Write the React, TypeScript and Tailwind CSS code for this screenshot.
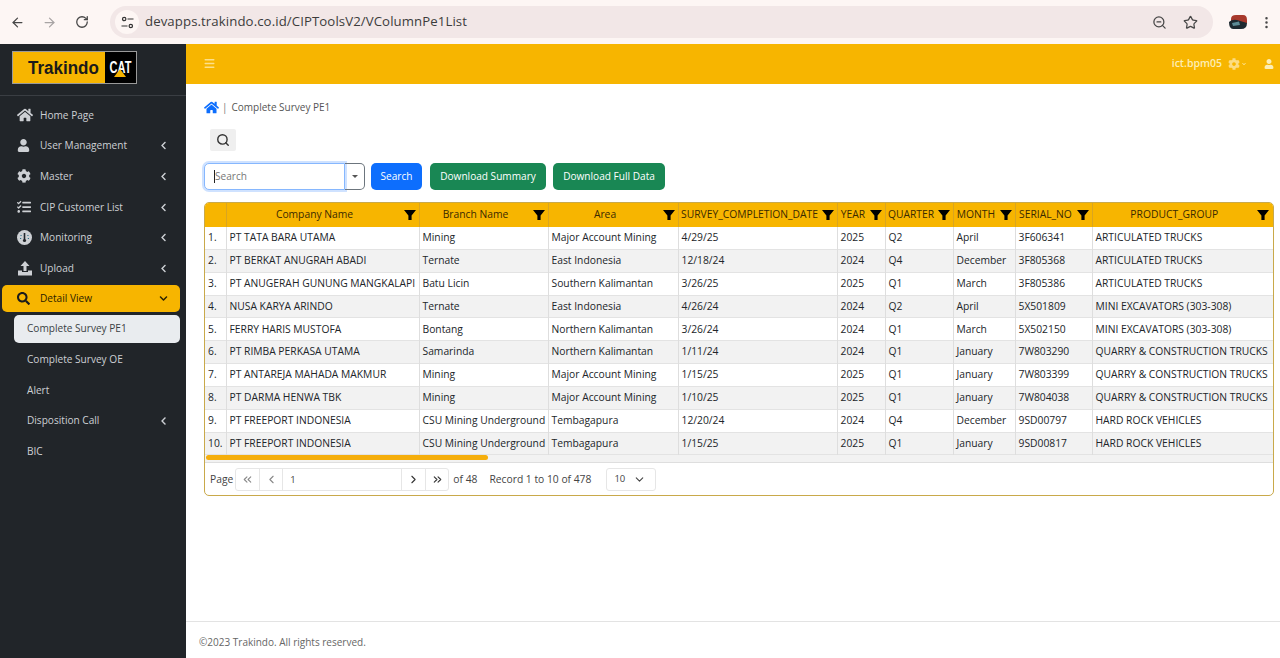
import {
  FaCog,
  FaChevronDown,
  FaChevronLeft,
  FaHome,
  FaSearch,
  FaTasks,
  FaUser,
} from "react-icons/fa";
import {
  ArrowLeft,
  ArrowRight,
  ChevronDown,
  ChevronLeft,
  ChevronRight,
  ChevronsLeft,
  ChevronsRight,
  EllipsisVertical,
  Menu,
  RotateCw,
  Search,
  Star,
  ZoomOut,
} from "lucide-react";

const FONT = "font-['Open_Sans','Noto_Sans',sans-serif]";

const columns = [
  { label: "", width: "w-[21px]" },
  { label: "Company Name", width: "w-[193px]" },
  { label: "Branch Name", width: "w-[129px]" },
  { label: "Area", width: "w-[130px]" },
  { label: "SURVEY_COMPLETION_DATE", width: "w-[159px]" },
  { label: "YEAR", width: "w-[48px]" },
  { label: "QUARTER", width: "w-[68px]" },
  { label: "MONTH", width: "w-[62px]" },
  { label: "SERIAL_NO", width: "w-[77px]" },
  { label: "PRODUCT_GROUP", width: "w-[182px]" },
];

const rows = [
  ["1.", "PT TATA BARA UTAMA", "Mining", "Major Account Mining", "4/29/25", "2025", "Q2", "April", "3F606341", "ARTICULATED TRUCKS"],
  ["2.", "PT BERKAT ANUGRAH ABADI", "Ternate", "East Indonesia", "12/18/24", "2024", "Q4", "December", "3F805368", "ARTICULATED TRUCKS"],
  ["3.", "PT ANUGERAH GUNUNG MANGKALAPI", "Batu Licin", "Southern Kalimantan", "3/26/25", "2025", "Q1", "March", "3F805386", "ARTICULATED TRUCKS"],
  ["4.", "NUSA KARYA ARINDO", "Ternate", "East Indonesia", "4/26/24", "2024", "Q2", "April", "5X501809", "MINI EXCAVATORS (303-308)"],
  ["5.", "FERRY HARIS MUSTOFA", "Bontang", "Northern Kalimantan", "3/26/24", "2024", "Q1", "March", "5X502150", "MINI EXCAVATORS (303-308)"],
  ["6.", "PT RIMBA PERKASA UTAMA", "Samarinda", "Northern Kalimantan", "1/11/24", "2024", "Q1", "January", "7W803290", "QUARRY & CONSTRUCTION TRUCKS"],
  ["7.", "PT ANTAREJA MAHADA MAKMUR", "Mining", "Major Account Mining", "1/15/25", "2025", "Q1", "January", "7W803399", "QUARRY & CONSTRUCTION TRUCKS"],
  ["8.", "PT DARMA HENWA TBK", "Mining", "Major Account Mining", "1/10/25", "2025", "Q1", "January", "7W804038", "QUARRY & CONSTRUCTION TRUCKS"],
  ["9.", "PT FREEPORT INDONESIA", "CSU Mining Underground", "Tembagapura", "12/20/24", "2024", "Q4", "December", "9SD00797", "HARD ROCK VEHICLES"],
  ["10.", "PT FREEPORT INDONESIA", "CSU Mining Underground", "Tembagapura", "1/15/25", "2025", "Q1", "January", "9SD00817", "HARD ROCK VEHICLES"],
];

function GaugeIcon() {
  return (
    <svg width="15" height="15" viewBox="0 0 15 15">
      <circle cx="7.5" cy="7.5" r="7.5" fill="#cdd0d4" />
      <path d="M7.5 3V10" stroke="#212529" strokeWidth="1.6" />
      <circle cx="7.5" cy="10.5" r="1.6" fill="#212529" />
      <path d="M3.5 5.5H4.6M3 8.5H4.2M10.4 5.5H11.5M10.8 8.5H12" stroke="#2c6f86" strokeWidth="1" />
    </svg>
  );
}

function UploadIcon() {
  return (
    <svg width="16" height="15" viewBox="0 0 16 15" fill="#cdd0d4">
      <path d="M8 0L12.5 5H9.5V10H6.5V5H3.5Z" />
      <path d="M1 9.5H5V11H11V9.5H15V14.5H1Z" />
    </svg>
  );
}

function FunnelIcon() {
  return (
    <svg width="12" height="10" viewBox="0 0 12 10" className="shrink-0">
      <path d="M0 0H12L7.6 5.5V10H4.4V5.5Z" fill="#000" />
    </svg>
  );
}

const topMenu = [
  { label: "Home Page", icon: <FaHome size={16} /> },
  { label: "User Management", icon: <FaUser size={13} />, more: true },
  { label: "Master", icon: <FaCog size={14} />, more: true },
  { label: "CIP Customer List", icon: <FaTasks size={14} />, more: true },
  { label: "Monitoring", icon: <GaugeIcon />, more: true },
  { label: "Upload", icon: <UploadIcon />, more: true },
];

const subMenu = [
  { label: "Complete Survey OE" },
  { label: "Alert" },
  { label: "Disposition Call", more: true },
  { label: "BIC" },
];

function BrowserBar() {
  return (
    <div className="flex h-[44px] items-center bg-[#fdf6f4] text-[#474747]">
      <div className="flex w-[110px] items-center gap-[17px] pl-[10px]">
        <ArrowLeft size={15} strokeWidth={2} />
        <ArrowRight size={15} strokeWidth={2} className="text-[#a8a4a4]" />
        <RotateCw size={14} strokeWidth={2.2} className="ml-[1px]" />
      </div>
      <div className="flex h-[32px] w-[1103px] items-center rounded-full bg-[#f2e7e7] pl-[5px] pr-[15px]">
        <span className="flex h-[24px] w-[24px] items-center justify-center rounded-full bg-[#fdf6f4]">
          <svg width="13" height="13" viewBox="0 0 13 13" fill="none" stroke="#333" strokeWidth="1.2">
            <circle cx="3.2" cy="3" r="1.7" />
            <path d="M6.5 3H12.5M.5 10H6.5" />
            <circle cx="9.8" cy="10" r="1.7" />
          </svg>
        </span>
        <span className="ml-[6px] flex-1 text-[13.2px] tracking-[0.1px] text-[#3c3c3c]">
          devapps.trakindo.co.id/CIPToolsV2/VColumnPe1List
        </span>
        <ZoomOut size={15} strokeWidth={2} className="mr-[16px]" />
        <Star size={15} strokeWidth={2} />
      </div>
      <svg width="20" height="16" viewBox="0 0 20 16" className="ml-[15px]">
        <path d="M3 5Q3 1 8 1H15Q19 1 19 6V9H3Z" fill="#a8392c" />
        <path d="M1 8Q4 5 9 6L19 9Q19 15 13 15H5Q1 15 1 8Z" fill="#1d2a30" />
        <path d="M4 9L11 7.5L12 11L5 12Z" fill="#5d8c96" />
      </svg>
      <EllipsisVertical size={15} className="ml-[11px]" />
    </div>
  );
}

function Logo() {
  return (
    <div className="flex h-[33px] w-[125px] border border-[#9a9a9a] bg-[#f7b500]">
      <div className="flex-1 pl-[15px] text-[17px] font-bold leading-[31px] text-[#1a1a1a] font-['Liberation_Sans',sans-serif]">
        <span className="inline-block scale-y-110">Trakindo</span>
      </div>
      <div className="relative flex w-[31px] justify-center bg-black font-['Liberation_Sans',sans-serif] text-[11px] font-bold leading-[31px] text-white">
        <span className="scale-y-150">CAT</span>
        <span className="absolute bottom-[6px] left-[9px] h-0 w-0 border-x-[6px] border-b-[8px] border-x-transparent border-b-[#f7b500]" />
      </div>
    </div>
  );
}

function Sidebar() {
  return (
    <aside className="flex w-[186px] shrink-0 flex-col bg-[#212529] text-[10.1px] text-[#cdd0d4]">
      <div className="flex h-[52px] items-start border-b border-[#3a3e43] pl-[12px] pt-[7px]">
        <Logo />
      </div>
      <nav className="pt-[4px]">
        {topMenu.map((item) => (
          <div key={item.label} className="flex h-[30.6px] items-center pl-[17px] pr-[18px]">
            <span className="flex w-[23px] justify-start">{item.icon}</span>
            <span className="flex-1">{item.label}</span>
            {item.more && <FaChevronLeft size={9} />}
          </div>
        ))}
        <div className="ml-[2px] mt-[1px] flex h-[27px] w-[178px] items-center rounded-[5px] bg-[#f7b500] pl-[15px] pr-[12px] pt-[1px] text-[#2b2200]">
          <span className="flex w-[23px]">
            <FaSearch size={13} className="text-[#1b1b1b]" />
          </span>
          <span className="flex-1">Detail View</span>
          <FaChevronDown size={9} />
        </div>
        <div className="ml-[14px] mt-[3px] flex h-[28px] w-[166px] items-center rounded-[5px] bg-[#e9ecef] pl-[13px] text-[#3a3f44]">
          Complete Survey PE1
        </div>
        {subMenu.map((item) => (
          <div key={item.label} className="flex h-[30.6px] translate-y-[1.5px] items-center pl-[27px] pr-[18px]">
            <span className="flex-1">{item.label}</span>
            {item.more && <FaChevronLeft size={9} />}
          </div>
        ))}
      </nav>
    </aside>
  );
}

function DataTable() {
  return (
    <div className="mr-[6px] overflow-hidden rounded-[5px] border border-[#c9a94a] text-[10.3px] text-[#212529]">
      <table className="w-full table-fixed border-collapse">
        <colgroup>
          {columns.map((c, i) => (
            <col key={i} className={c.width} />
          ))}
        </colgroup>
        <thead>
          <tr className="h-[23.5px] bg-[#f7b500] text-[#3a2a00]">
            {columns.map((c, i) => (
              <th key={i} className="border-r border-[#d9a520] pl-[2px] pr-[3px] font-normal last:border-r-0 last:pr-[5px]">
                {c.label && (
                  <div className="flex items-center">
                    <span className="flex-1 whitespace-nowrap text-center">{c.label}</span>
                    <span className="ml-[3px]">
                      <FunnelIcon />
                    </span>
                  </div>
                )}
              </th>
            ))}
          </tr>
        </thead>
        <tbody>
          {rows.map((row, r) => (
            <tr key={r} className={`h-[22.85px] border-b border-[#e3e3e3] ${r % 2 ? "bg-[#f2f2f2]" : "bg-white"}`}>
              {row.map((cell, i) => (
                <td key={i} className="overflow-hidden whitespace-nowrap border-r border-[#dedede] pl-[3px] last:border-r-0">
                  {cell}
                </td>
              ))}
            </tr>
          ))}
        </tbody>
      </table>
      <div className="h-[7px] bg-[#f2f2f2] px-[1px]">
        <div className="h-[5px] w-[282px] rounded-full bg-[#f5ae0c]" />
      </div>
      <div className="flex h-[33px] items-center border-t border-[#dedede] pl-[5px] text-[#444]">
        <span className="mr-[2px]">Page</span>
        <div className="flex h-[23px] items-center rounded-[3px] border border-[#e6e6e6] text-[#888]">
          <span className="flex h-full w-[24px] items-center justify-center border-r border-[#e6e6e6]">
            <ChevronsLeft size={13} />
          </span>
          <span className="flex h-full w-[23px] items-center justify-center border-r border-[#e6e6e6]">
            <ChevronLeft size={13} />
          </span>
          <span className="h-[21px] w-[118px] pl-[7px] text-[9.5px] leading-[21px] text-[#444]">1</span>
          <span className="flex h-full w-[24px] items-center justify-center border-l border-[#e6e6e6] text-[#333]">
            <ChevronRight size={13} />
          </span>
          <span className="flex h-full w-[23px] items-center justify-center border-l border-[#e6e6e6] text-[#333]">
            <ChevronsRight size={13} />
          </span>
        </div>
        <span className="ml-[4px]">of 48</span>
        <span className="ml-[12px]">Record 1 to 10 of 478</span>
        <div className="ml-[15px] flex h-[23px] w-[50px] items-center rounded-[3px] border border-[#e6e6e6] pl-[7px] text-[9.5px]">
          <span className="flex-1">10</span>
          <ChevronDown size={13} className="mr-[9px]" />
        </div>
      </div>
    </div>
  );
}

export default function App() {
  return (
    <div className={`flex h-[658px] w-[1280px] flex-col overflow-hidden bg-white ${FONT}`}>
      <BrowserBar />
      <div className="flex min-h-0 flex-1">
        <Sidebar />
        <main className="flex min-w-0 flex-1 flex-col">
          <header className="flex h-[40px] shrink-0 items-center bg-[#f7b500] pl-[17px] pr-[6px] text-[10.5px] text-[#fdeeb5]">
            <Menu size={13} strokeWidth={2.5} className="mb-[2px] text-[#fde08a]" />
            <span className="ml-auto font-semibold">ict.bpm05</span>
            <FaCog size={12} className="ml-[6px] text-[#fcdc82]" />
            <FaChevronDown size={4} className="ml-[2px]" />
            <FaUser size={10} className="ml-[18px]" />
          </header>

          <div className="flex-1 pl-[18px]">
            <div className="flex items-center pt-[16px] text-[10px] text-[#555]">
              <FaHome size={15} className="text-[#0d6efd]" />
              <span className="ml-[3px] text-[#777]">|</span>
              <span className="ml-[4px]">Complete Survey PE1</span>
            </div>
            <div className="ml-[6px] mt-[14px] flex h-[22px] w-[26px] items-center justify-center rounded-[2px] bg-[#efefef]">
              <Search size={14} strokeWidth={2.4} className="text-[#333]" />
            </div>
            <div className="mt-[12px] flex h-[27px] items-center text-[10.1px]">
              <div className="flex h-full w-[141px] items-center rounded-l-[5px] border border-[#86b7fe] bg-white pl-[9px] text-[#777] shadow-[0_0_0_2px_#cfe2ff]">
                <span className="h-[13px] w-px bg-[#222]" />
                Search
              </div>
              <div className="flex h-full w-[20px] items-center justify-center rounded-r-[5px] border border-l-0 border-[#6c757d] text-[#555]">
                <span className="h-0 w-0 border-x-[3px] border-t-[3px] border-x-transparent border-t-[#555]" />
              </div>
              <button className="ml-[6px] h-full w-[51px] rounded-[5px] bg-[#0d6efd] text-white">Search</button>
              <button className="ml-[8px] h-full w-[116px] rounded-[5px] bg-[#198754] text-white">Download Summary</button>
              <button className="ml-[7px] h-full w-[112px] rounded-[5px] bg-[#198754] text-white">Download Full Data</button>
            </div>
            <div className="mt-[12px]">
              <DataTable />
            </div>
          </div>

          <footer className="flex h-[37px] shrink-0 items-center border-t border-[#e3e3e3] pl-[13px] pt-[5px] text-[10px] text-[#666]">
            ©2023 Trakindo. All rights reserved.
          </footer>
        </main>
      </div>
    </div>
  );
}
